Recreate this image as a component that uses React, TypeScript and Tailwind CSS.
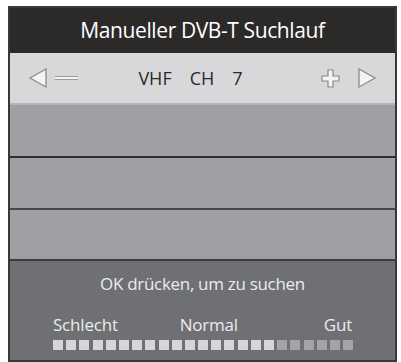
import React from 'react';

const Arrow: React.FC<{ dir: 'left' | 'right' }> = ({ dir }) => (
  <svg width="22" height="22" viewBox="0 0 22 22">
    <polygon
      points={dir === 'left' ? '19,2 3,11 19,20' : '3,2 19,11 3,20'}
      fill="#f4f4f4"
      stroke="#8a8a8e"
      strokeWidth="1.3"
    />
  </svg>
);

const App: React.FC = () => {
  const bars = Array.from({ length: 23 }, (_, i) => i < 17);

  return (
    <div className="w-[401px] h-[362px] bg-white pt-[6px] pl-[8px]" style={{ fontFamily: '"Open Sans", "Liberation Sans", sans-serif' }}>
      <div className="w-[389px] h-[356px] border-2 border-[#38383a] flex flex-col bg-[#a09fa4]">
        {/* Title */}
        <div className="h-[45px] bg-[#2c2929] flex items-center justify-center text-white text-[21px] tracking-[-0.4px]">
          Manueller DVB-T Suchlauf
        </div>

        {/* Channel bar */}
        <div className="h-[52px] bg-[#d8d8da] border-b-2 border-[#b5b5b8] flex items-center px-[17px] text-[#2a2a2a]">
          <Arrow dir="left" />
          <div className="ml-[6px] w-[23px] h-[4px] border-y border-[#9a9a9e] bg-[#f2f2f2]" />
          <div className="flex-1 flex justify-center gap-[18px] text-[18px] pr-[18px]">
            <span>VHF</span>
            <span>CH</span>
            <span>7</span>
          </div>
          <svg width="19" height="19" viewBox="0 0 19 19" className="mr-[16px]">
            <path d="M7 1h5v6h6v5h-6v6H7v-6H1V7h6z" fill="#f4f4f4" stroke="#8a8a8e" strokeWidth="1.2" />
          </svg>
          <Arrow dir="right" />
        </div>

        {/* Empty rows */}
        <div className="h-[53px] border-b-2 border-[#2f2f31]" />
        <div className="h-[52px] border-b-2 border-[#48484b]" />
        <div className="h-[51px] border-b-2 border-[#3c3c3e]" />

        {/* Bottom */}
        <div className="flex-1 bg-[#6f7073] flex flex-col text-[#ececec]">
          <div className="text-center text-[17px] leading-6 mt-[11px] tracking-[-0.3px]">OK drücken, um zu suchen</div>
          <div className="flex justify-between px-[43px] text-[17px] mt-[19px] leading-5 tracking-[-0.2px]">
            <span>Schlecht</span>
            <span className="mr-[24px]">Normal</span>
            <span>Gut</span>
          </div>
          <div className="flex gap-[3.2px] pl-[43px] mt-[5px]">
            {bars.map((on, i) => (
              <div key={i} className={`w-[10px] h-[10px] ${on ? 'bg-[#d6d6d8]' : 'bg-[#a4a4a7]'}`} />
            ))}
          </div>
        </div>
      </div>
    </div>
  );
};

export default App;
